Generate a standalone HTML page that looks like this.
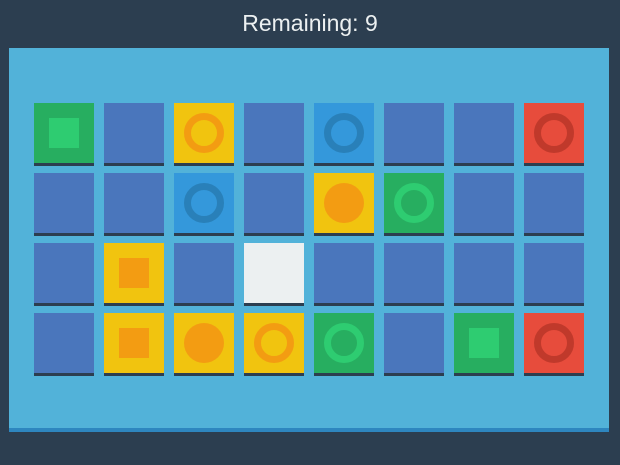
<!DOCTYPE html>
<html><head><style>
*{margin:0;padding:0;box-sizing:border-box}
body{width:620px;height:465px;background:#2c3e50;position:relative;overflow:hidden;font-family:"Liberation Sans",sans-serif}
.title{position:absolute;top:0;left:0;width:620px;height:48px;line-height:46px;text-align:center;color:#ecf0f1;font-size:23px;font-weight:300}
.board{position:absolute;left:9px;top:48px;width:600px;height:384px;background:#52b2d9;border-bottom:4px solid #2e86bf}
.t{position:absolute;width:60px;height:63px;border-bottom:3px solid #2c3e50}
.b{background:#4a76bc}.y{background:#f1c40f}.g{background:#27ae60}.l{background:#3498db}.r{background:#e74c3c}.w{background:#ecf0f1}
.sq{position:absolute;left:15px;top:15px;width:30px;height:30px}
.ring{position:absolute;left:10px;top:10px;width:40px;height:40px;border-radius:50%;border:7px solid}
.dot{position:absolute;left:10px;top:10px;width:40px;height:40px;border-radius:50%}
</style></head><body>
<div class="title">Remaining: 9</div>
<div class="board"></div>
<!-- row1 y=103 -->
<div class="t g" style="left:34px;top:103px"><div class="sq" style="background:#2ecc71"></div></div>
<div class="t b" style="left:104px;top:103px"></div>
<div class="t y" style="left:174px;top:103px"><div class="ring" style="border-color:#f39c12"></div></div>
<div class="t b" style="left:244px;top:103px"></div>
<div class="t l" style="left:314px;top:103px"><div class="ring" style="border-color:#2980b9"></div></div>
<div class="t b" style="left:384px;top:103px"></div>
<div class="t b" style="left:454px;top:103px"></div>
<div class="t r" style="left:524px;top:103px"><div class="ring" style="border-color:#c0392b"></div></div>
<!-- row2 -->
<div class="t b" style="left:34px;top:173px"></div>
<div class="t b" style="left:104px;top:173px"></div>
<div class="t l" style="left:174px;top:173px"><div class="ring" style="border-color:#2980b9"></div></div>
<div class="t b" style="left:244px;top:173px"></div>
<div class="t y" style="left:314px;top:173px"><div class="dot" style="background:#f39c12"></div></div>
<div class="t g" style="left:384px;top:173px"><div class="ring" style="border-color:#2ecc71"></div></div>
<div class="t b" style="left:454px;top:173px"></div>
<div class="t b" style="left:524px;top:173px"></div>
<!-- row3 -->
<div class="t b" style="left:34px;top:243px"></div>
<div class="t y" style="left:104px;top:243px"><div class="sq" style="background:#f39c12"></div></div>
<div class="t b" style="left:174px;top:243px"></div>
<div class="t w" style="left:244px;top:243px"></div>
<div class="t b" style="left:314px;top:243px"></div>
<div class="t b" style="left:384px;top:243px"></div>
<div class="t b" style="left:454px;top:243px"></div>
<div class="t b" style="left:524px;top:243px"></div>
<!-- row4 -->
<div class="t b" style="left:34px;top:313px"></div>
<div class="t y" style="left:104px;top:313px"><div class="sq" style="background:#f39c12"></div></div>
<div class="t y" style="left:174px;top:313px"><div class="dot" style="background:#f39c12"></div></div>
<div class="t y" style="left:244px;top:313px"><div class="ring" style="border-color:#f39c12"></div></div>
<div class="t g" style="left:314px;top:313px"><div class="ring" style="border-color:#2ecc71"></div></div>
<div class="t b" style="left:384px;top:313px"></div>
<div class="t g" style="left:454px;top:313px"><div class="sq" style="background:#2ecc71"></div></div>
<div class="t r" style="left:524px;top:313px"><div class="ring" style="border-color:#c0392b"></div></div>
</body></html>
